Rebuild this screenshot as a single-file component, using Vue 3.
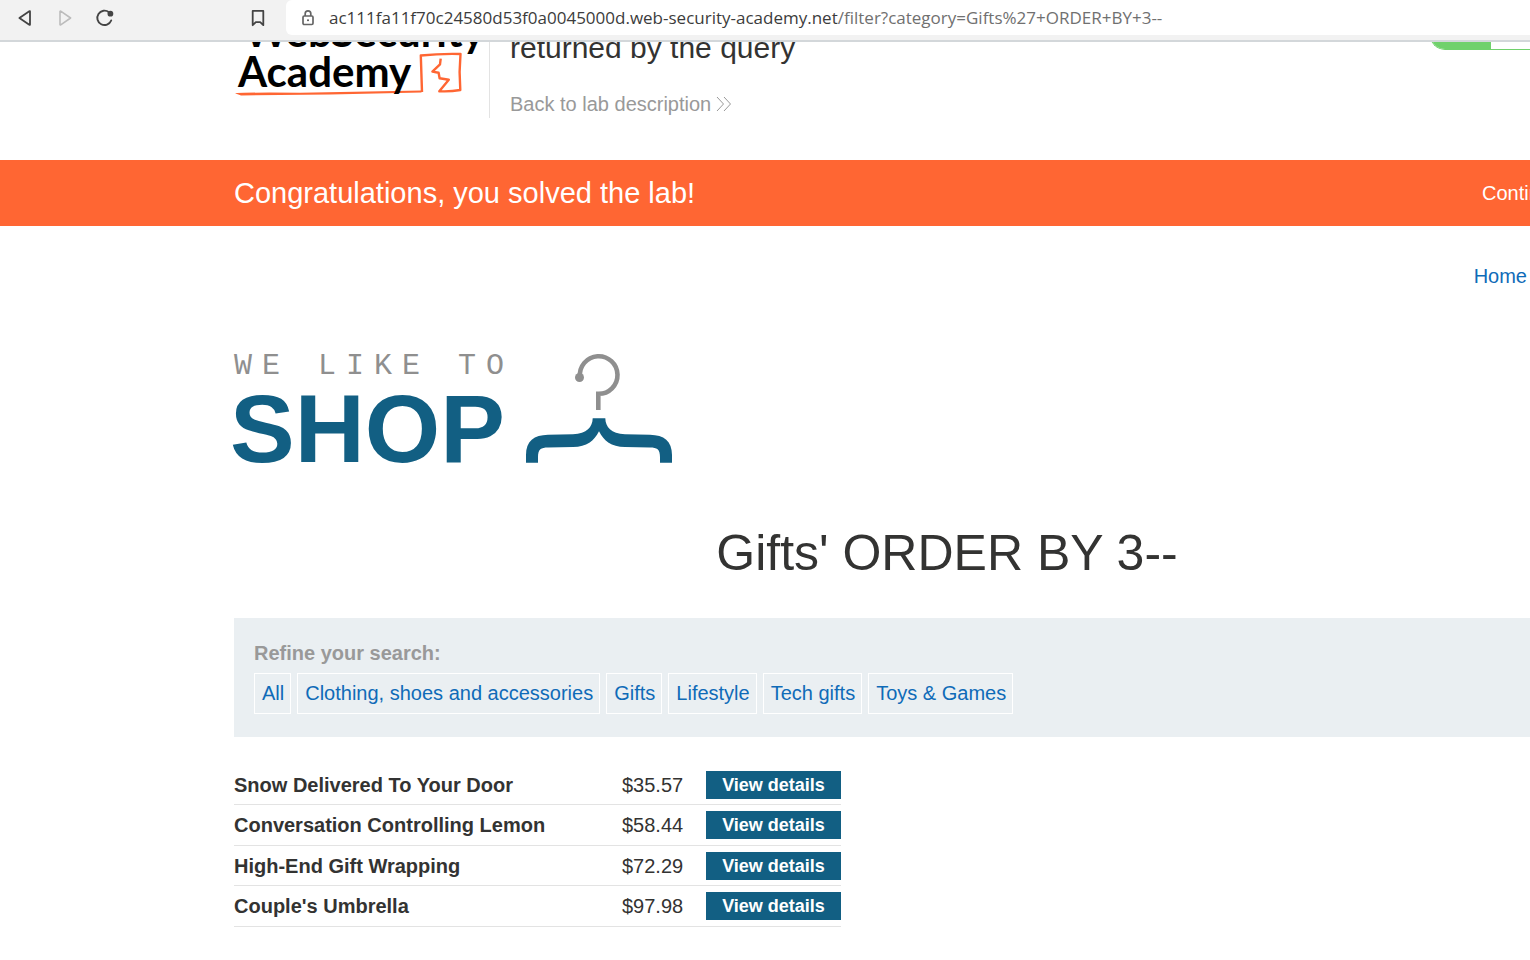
<script setup>
const categories = ['All', 'Clothing, shoes and accessories', 'Gifts', 'Lifestyle', 'Tech gifts', 'Toys & Games']
const products = [
  { name: 'Snow Delivered To Your Door', price: '$35.57' },
  { name: 'Conversation Controlling Lemon', price: '$58.44' },
  { name: 'High-End Gift Wrapping', price: '$72.29' },
  { name: "Couple's Umbrella", price: '$97.98' }
]
</script>

<template>
  <div class="window">
    <header class="toolbar">
      <nav class="tools">
        <button type="button" class="tool" aria-label="Back">
          <svg width="20" height="20" viewBox="0 0 20 20"><path d="M4.400 10 14.300 3.200Q15 2.800 15 3.600V16.400Q15 17.200 14.300 16.800Z" fill="none" stroke="#444" stroke-width="1.800" stroke-linejoin="round" /></svg>
        </button>
        <button type="button" class="tool" aria-label="Forward" disabled>
          <svg width="20" height="20" viewBox="0 0 20 20"><path d="M15.600 10 5.700 3.200Q5 2.800 5 3.600V16.400Q5 17.200 5.700 16.800Z" fill="none" stroke="#bcbcbc" stroke-width="1.600" stroke-linejoin="round" /></svg>
        </button>
        <button type="button" class="tool" aria-label="Reload">
          <svg width="20" height="20" viewBox="0 0 20 20"><path d="M14 4.200A7.200 7.200 0 1 0 16.200 12.500" fill="none" stroke="#444" stroke-width="1.900" stroke-linecap="round" /><circle cx="15.400" cy="5.700" r="2.900" fill="#444" /></svg>
        </button>
      </nav>
      <button type="button" class="tool" aria-label="Bookmark">
        <svg width="20" height="20" viewBox="0 0 20 20"><path d="M4.700 2.900H15.300V17.200L12.200 14.200H7.800L4.700 17.200Z" fill="none" stroke="#444" stroke-width="1.800" stroke-linejoin="round" /></svg>
      </button>
      <div class="address">
        <svg width="14" height="18" viewBox="0 0 14 18"><rect x="2" y="7" width="10" height="8.500" rx="1.200" fill="none" stroke="#666" stroke-width="1.700" /><path d="M4.200 7V4.600A2.800 2.800 0 0 1 9.800 4.600V7" fill="none" stroke="#666" stroke-width="1.700" /><circle cx="7" cy="11.200" r="1" fill="#555" /></svg>
        <span class="url">ac111fa11f70c24580d53f0a0045000d.web-security-academy.net<span class="path">/filter?category=Gifts%27+ORDER+BY+3--</span></span>
      </div>
    </header>

    <main>
      <section class="lab">
        <svg class="academy" width="256" height="76" viewBox="234 42 256 76">
          <path d="M235 93.300Q238 92.300 300 92.700L421.500 90.500V92.600L330 94.500L241 95.500Z" fill="#ff6633" />
          <path d="M422 92 420.800 55.500Q440 53.500 460.500 54L459.600 72 460.300 90Q450 91.800 439.300 91.200L448.800 79.700 439.600 78.300 438.600 72.800 432.400 71.600 440 64.300 440.700 58.700" fill="none" stroke="#ff6633" stroke-width="2.400" stroke-linejoin="round" />
          <text class="brand" x="244" y="47">WebSecurity</text>
          <text class="brand" x="238" y="87">Academy</text>
        </svg>
        <div class="intro">
          <h2>returned by the query</h2>
          <a class="back" href="#">Back to lab description
            <svg width="16" height="16" viewBox="0 0 16 16"><path d="M1 1 7.500 8 1 15M8 1 14.500 8 8 15" fill="none" stroke="#999" stroke-width="1" /></svg>
          </a>
        </div>
        <div class="status"><i></i></div>
      </section>

      <section class="banner">
        <p>Congratulations, you solved the lab!</p>
        <a href="#">Continue</a>
      </section>

      <div class="store">
        <nav class="topnav"><a href="#">Home</a></nav>
        <svg class="shop" width="440" height="120" viewBox="234 350 440 120">
          <text class="tagline" x="234" y="374">WE LIKE TO</text>
          <text class="name" x="230" y="462">SHOP</text>
          <path d="M580 377A18.800 18.800 0 1 1 598.300 393.800V410" fill="none" stroke="#8f8f8f" stroke-width="4.600" />
          <circle cx="579.500" cy="377.500" r="4.500" fill="#8f8f8f" />
          <path d="M592.700 418.300H605.300C605.500 427 611 433.700 625 434.200L650 434.700C664 435 672 441 672 455V462.700H660V457C660 449 657 447.500 650 447.400L625 447C611 446.500 604 441 599 431.200C594 441 587 446.500 573 447L548 447.400C541 447.500 538 449 538 457V462.700H526V455C526 441 534 435 548 434.700L573 434.200C587 433.700 592.500 427 592.700 418.300Z" fill="#125f83" />
        </svg>
        <h1>Gifts' ORDER BY 3--</h1>
        <section class="filters">
          <strong>Refine your search:</strong>
          <nav><a v-for="category in categories" :key="category" href="#">{{ category }}</a></nav>
        </section>
        <table class="products">
          <tbody>
            <tr v-for="product in products" :key="product.name">
              <th scope="row">{{ product.name }}</th>
              <td class="price">{{ product.price }}</td>
              <td><a class="details" href="#">View details</a></td>
            </tr>
          </tbody>
        </table>
      </div>
    </main>
  </div>
</template>

<style>
body {
  background: #fff;
}
</style>

<style scoped>
.window {
  font-family: "Liberation Sans", Arial, sans-serif;
  font-size: 20px;
  line-height: 24px;
  color: #333332;
  overflow: hidden;
}
a {
  color: #0f6bb8;
  text-decoration: none;
}
.toolbar {
  display: flex;
  align-items: flex-start;
  box-sizing: border-box;
  height: 42px;
  padding-left: 15px;
  background: #f2f2f2;
  border-bottom: 2px solid #d3d7da;
}
.tools {
  display: flex;
  gap: 20px;
  margin-right: 133px;
}
.tool {
  display: flex;
  padding: 0;
  margin-top: 8px;
  border: 0;
  background: none;
}
.address {
  display: flex;
  flex: 1;
  align-items: center;
  gap: 14px;
  height: 35px;
  margin-left: 18px;
  padding-left: 15px;
  background: #fff;
  border-radius: 6px 0 0 6px;
}
.url {
  font: 17px/24px "Open Sans", "Noto Sans", sans-serif;
  color: #3c3c3c;
  white-space: nowrap;
}
.path {
  color: #707070;
}
.lab {
  display: flex;
  height: 118px;
  padding-left: 234px;
  overflow: hidden;
}
.academy {
  flex: none;
}
.brand {
  font: 700 42px Lato, sans-serif;
  fill: #000;
}
.intro {
  box-sizing: border-box;
  height: 76px;
  margin-left: -1px;
  padding-left: 20px;
  border-left: 1px solid #e3e3e3;
}
h2 {
  margin: -10px 0 28px;
  font-size: 30px;
  font-weight: 400;
  line-height: 32px;
}
.back {
  display: flex;
  align-items: center;
  gap: 5px;
  color: #999;
}
.status {
  box-sizing: border-box;
  width: 100px;
  height: 30px;
  margin-top: -22px;
  margin-left: auto;
  border: 1px solid #70d16c;
  border-right: 0;
  border-radius: 15px 0 0 15px;
  overflow: hidden;
}
.status i {
  display: block;
  width: 60px;
  height: 100%;
  background: #70d16c;
}
.banner {
  display: flex;
  align-items: center;
  justify-content: space-between;
  height: 66px;
  padding-left: 234px;
  background: #ff6633;
  color: #fff;
}
.banner p {
  margin: 0;
  font-size: 29px;
  line-height: 32px;
}
.banner a {
  width: 48px;
  color: #fff;
  white-space: nowrap;
}
.store {
  padding-left: 234px;
}
.topnav {
  display: flex;
  justify-content: flex-end;
  padding: 38px 3px 62px 0;
}
.shop {
  display: block;
  overflow: visible;
}
.tagline {
  font: 30px "Liberation Mono", monospace;
  letter-spacing: 10px;
  fill: #8f8f8f;
}
.name {
  font: 700 97px "Liberation Sans", Arial, sans-serif;
  fill: #125f83;
}
h1 {
  margin: 53px -130px 34px 0;
  font-size: 50px;
  font-weight: 400;
  line-height: 61px;
  text-align: center;
}
.filters {
  padding: 23px 20px;
  background: #eaeff2;
}
.filters strong {
  display: block;
  color: #999;
}
.filters nav {
  display: flex;
  flex-wrap: wrap;
  gap: 6px;
  margin-top: 8px;
}
.filters nav a {
  padding: 7px 6px 8px 7px;
  border: 1px solid #fff;
}
.products {
  width: 607px;
  margin-top: 28px;
  border-spacing: 0;
}
.products tr {
  height: 40px;
}
.products tr:nth-child(even) {
  height: 41px;
}
.products th,
.products td {
  padding: 0;
  border-bottom: 1px solid #e3e3e3;
  text-align: left;
}
.products .price {
  width: 84px;
}
.products td:last-child {
  width: 135px;
}
.details {
  display: block;
  background: #125f83;
  color: #fff;
  font-size: 18px;
  font-weight: 700;
  line-height: 28px;
  text-align: center;
}
</style>
